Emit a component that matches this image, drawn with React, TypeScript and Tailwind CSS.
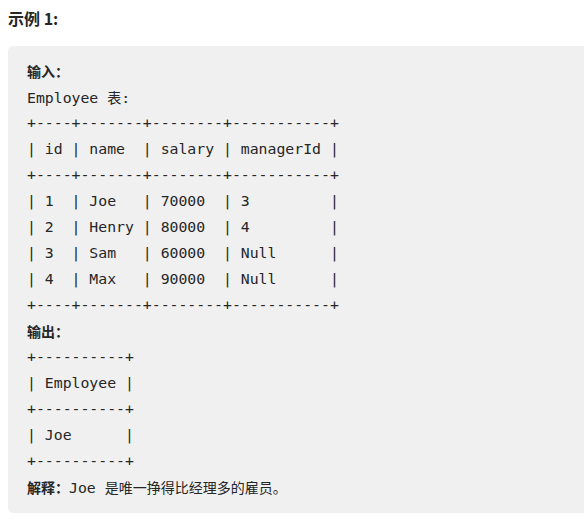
import React from "react";

const mono = "font-['DejaVu_Sans_Mono',monospace] text-[14.8px]";
const cjk = "font-['Noto_Sans_CJK_SC',sans-serif] text-[14px]";

function Line({ children }: { children: React.ReactNode }) {
  return <div className="h-[26px] leading-[26px] whitespace-pre">{children}</div>;
}

export default function App() {
  const tableLines = [
    "+----+-------+--------+-----------+",
    "| id | name  | salary | managerId |",
    "+----+-------+--------+-----------+",
    "| 1  | Joe   | 70000  | 3         |",
    "| 2  | Henry | 80000  | 4         |",
    "| 3  | Sam   | 60000  | Null      |",
    "| 4  | Max   | 90000  | Null      |",
    "+----+-------+--------+-----------+",
  ];
  const outLines = [
    "+----------+",
    "| Employee |",
    "+----------+",
    "| Joe      |",
    "+----------+",
  ];
  return (
    <div className="w-[584px] h-[524px] overflow-hidden bg-white text-[#262626]">
      <div className="pl-[8px] pt-[6px]">
        <div className="h-[24px] leading-[24px] text-[16px] font-bold font-['Noto_Sans_CJK_SC',sans-serif]">
          示例 1:
        </div>
        <div className="mt-[16px] w-[620px] rounded-[5px] bg-[#f0f0f0] pl-[19px] pt-[12px] pb-[13px]">
          <div className={mono}>
            <Line>
              <span className={`${cjk} font-bold`}>输入：</span>
            </Line>
            <Line>
              Employee <span className={cjk}>表</span>:
            </Line>
            {tableLines.map((l, i) => (
              <Line key={i}>{l}</Line>
            ))}
            <Line>
              <span className={`${cjk} font-bold`}>输出：</span>
            </Line>
            {outLines.map((l, i) => (
              <Line key={"o" + i}>{l}</Line>
            ))}
            <Line>
              <span className={`${cjk} font-bold`}>解释：</span>Joe <span className={cjk}>是唯一挣得比经理多的雇员。</span>
            </Line>
          </div>
        </div>
      </div>
    </div>
  );
}
